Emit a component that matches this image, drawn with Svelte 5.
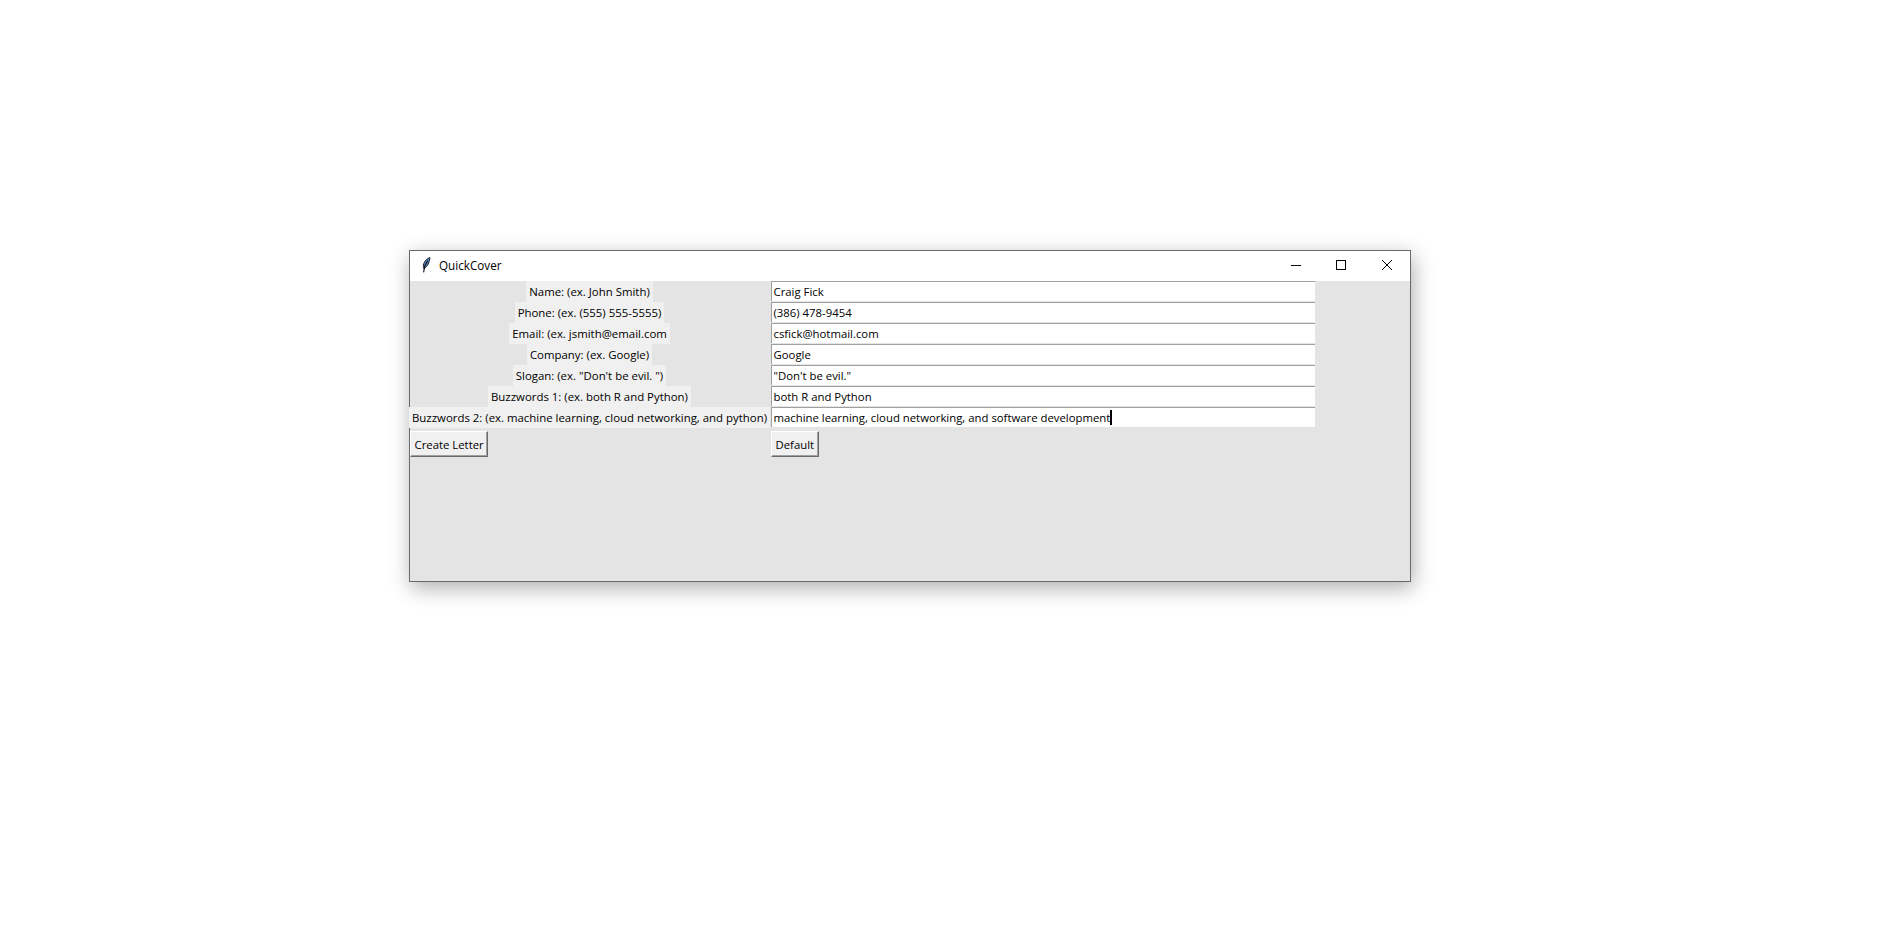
<script>
	const rows = [
		{ label: 'Name: (ex. John Smith)', value: 'Craig Fick' },
		{ label: 'Phone: (ex. (555) 555-5555)', value: '(386) 478-9454' },
		{ label: 'Email: (ex. jsmith@email.com', value: 'csfick@hotmail.com' },
		{ label: 'Company: (ex. Google)', value: 'Google' },
		{ label: 'Slogan: (ex. "Don\'t be evil. ")', value: '"Don\'t be evil."' },
		{ label: 'Buzzwords 1: (ex. both R and Python)', value: 'both R and Python' },
		{ label: 'Buzzwords 2: (ex. machine learning, cloud networking, and python)', value: 'machine learning, cloud networking, and software development', focused: true }
	];
</script>

<div class="desktop">
	<section class="window">
		<header class="titlebar">
			<svg class="feather" width="11" height="16" viewBox="0 0 11 16" aria-hidden="true">
				<path d="M8.8 .6C6.4 1.4 3.8 3.6 2.8 6.6 2.2 8.6 2.2 10.4 2.8 11.6 4.8 10.8 6.6 8.6 7.6 6 8.4 4 9 2.2 8.8 .6Z" fill="#5f8fc4" stroke="#141c30" stroke-width="1" />
				<path d="M6.8 3.6 3.8 9 2.6 15.4" fill="none" stroke="#0a0a12" stroke-width="1.1" />
			</svg>
			<span class="title">QuickCover</span>
			<div class="controls">
				<button class="control" aria-label="Minimize">
					<svg width="10" height="10" viewBox="0 0 10 10"><path d="M0 5.5H10" stroke="#000" /></svg>
				</button>
				<button class="control" aria-label="Maximize">
					<svg width="10" height="10" viewBox="0 0 10 10"><rect x=".5" y=".5" width="9" height="9" fill="none" stroke="#000" /></svg>
				</button>
				<button class="control" aria-label="Close">
					<svg width="10" height="10" viewBox="0 0 10 10"><path d="M0 0L10 10M10 0L0 10" stroke="#000" stroke-width="1" /></svg>
				</button>
			</div>
		</header>

		<div class="form">
			{#each rows as row}
				<div class="label-cell"><span class="label">{row.label}</span></div>
				<div class="entry">
					{row.value}{#if row.focused}<span class="caret"></span>{/if}
				</div>
			{/each}
			<div class="actions"><button class="tk-button">Create Letter</button></div>
			<div class="actions"><button class="tk-button">Default</button></div>
		</div>
	</section>
</div>

<style>
	:global(body) {
		background: #fff;
	}

	.desktop {
		height: 930px;
		padding: 250px 0 0 409px;
		box-sizing: border-box;
		font-family: 'Open Sans', 'Noto Sans', sans-serif;
		font-size: 11.35px;
		color: #000;
	}

	.window {
		width: 1002px;
		height: 332px;
		box-sizing: border-box;
		background: #e4e4e4;
		border: 1px solid #6a6a6a;
		box-shadow: 2px 6px 20px rgba(0, 0, 0, 0.32);
	}

	.titlebar {
		display: flex;
		align-items: flex-start;
		height: 30px;
		background: #fff;
		padding-left: 11px;
	}

	.feather {
		flex: none;
		margin-top: 6px;
	}

	.title {
		margin-left: 7px;
		margin-top: 6px;
		line-height: 16px;
		font-size: 11.7px;
	}

	.controls {
		display: flex;
		margin-left: auto;
		margin-right: 1px;
	}

	.control {
		display: flex;
		align-items: center;
		justify-content: center;
		width: 45px;
		height: 28px;
		padding: 0;
		border: 0;
		background: none;
	}

	.control:last-child {
		margin-left: 1px;
	}

	.form {
		display: grid;
		grid-template-columns: 361px 544px;
		grid-auto-rows: 21px;
	}

	.label-cell {
		display: flex;
		justify-content: center;
		padding-right: 2px;
		font-size: 11.42px;
	}

	.label {
		display: flex;
		align-items: center;
		height: 21px;
		padding: 0 3px;
		background: #f0f0f0;
		white-space: nowrap;
	}

	.entry {
		display: flex;
		align-items: center;
		height: 20px;
		box-sizing: border-box;
		padding-left: 1.5px;
		background: #fff;
		border-top: 1px solid #a0a0a0;
		border-left: 1px solid #a0a0a0;
		white-space: pre;
	}

	.caret {
		width: 2px;
		height: 15px;
		background: #000;
	}

	.actions {
		padding-top: 4px;
		height: 26px;
	}

	.tk-button {
		display: block;
		height: 26px;
		margin-top: -1px;
		padding: 0 3.5px;
		font: inherit;
		color: #000;
		background: #f0f0f0;
		border: 1px solid;
		border-color: #fff #696969 #696969 #fff;
		box-shadow: inset -1px -1px 0 #a0a0a0;
	}
</style>
